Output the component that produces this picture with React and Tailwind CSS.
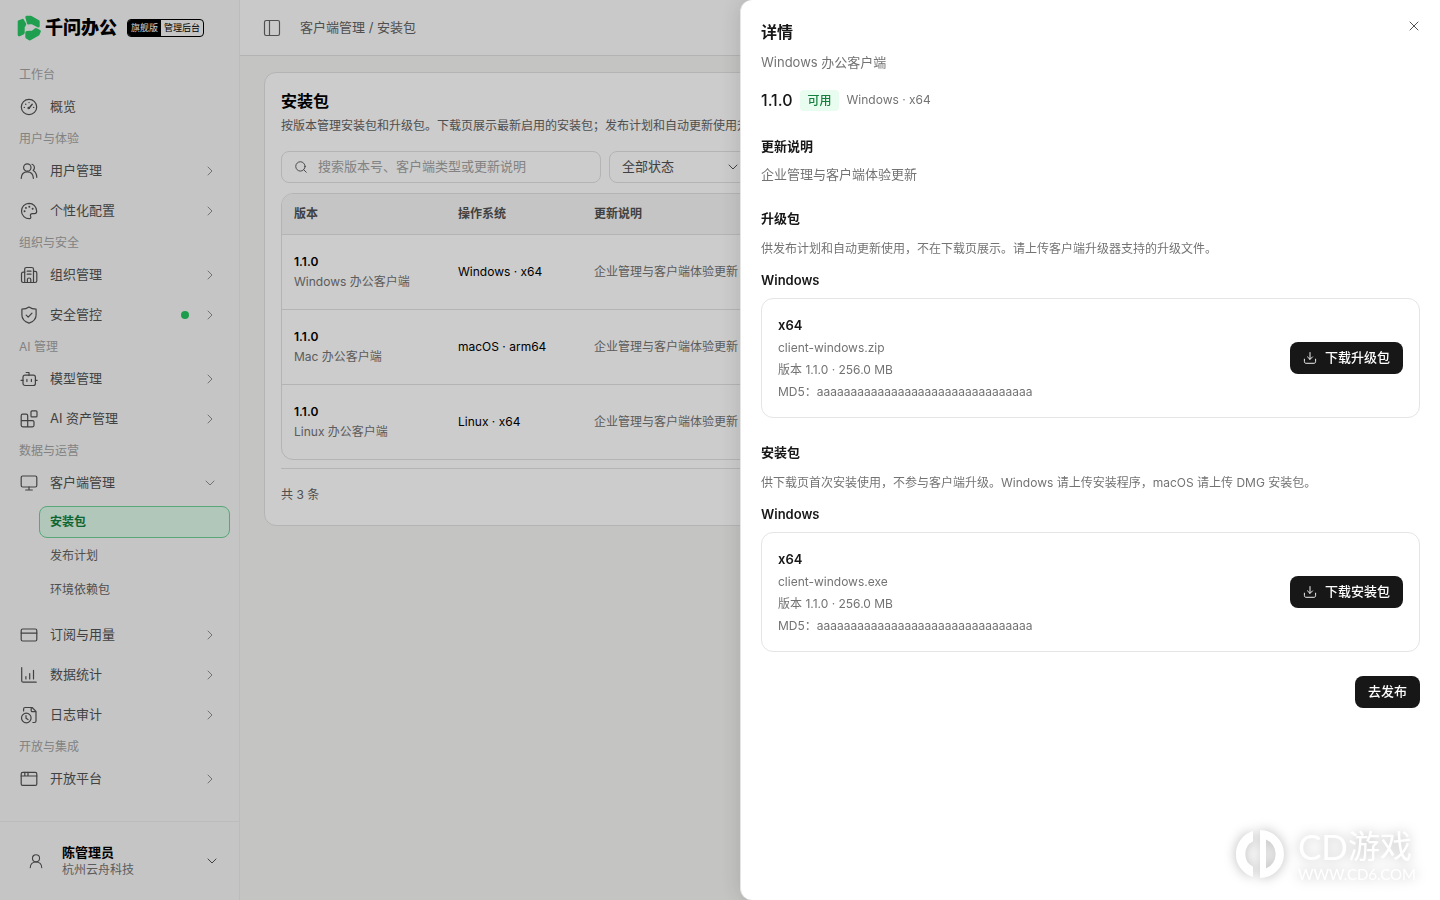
import React, { useState } from 'react';
import { ChevronDown, ChevronRight, PanelLeft, Search, X } from 'lucide-react';

const Icon = ({ children, className = 'h-[18px] w-[18px]' }) => (
    <svg
        viewBox="0 0 18 18"
        fill="none"
        stroke="currentColor"
        strokeWidth="1.2"
        strokeLinecap="round"
        strokeLinejoin="round"
        className={`shrink-0 ${className}`}
        aria-hidden="true"
    >
        {children}
    </svg>
);

const icons = {
    gauge: (
        <>
            <circle cx="9" cy="9" r="7.7" />
            <path d="M9 10.2 12.2 6.2" strokeWidth="1.4" />
            <circle cx="8.7" cy="10" r=".7" fill="currentColor" />
            <path d="M4.3 9.4h.1M5.7 6.2h.1M9 4.6h.1M13.6 9.4h.1" strokeWidth="1.4" />
        </>
    ),
    users: (
        <>
            <circle cx="7.3" cy="5.5" r="3.7" />
            <path d="M1.2 16.4c.2-3.9 2.3-6.5 6.1-6.5s5.9 2.6 6.1 6.5" />
            <path d="M12 2.3c2.8.9 3.2 4.3 1.2 6.2 2.3 1.3 3.5 3.7 3.6 6.8" />
        </>
    ),
    palette: (
        <>
            <path d="M9 1.3a7.7 7.7 0 1 0 .4 15.4c1.5-.1 1.7-1.4 1.2-2.4-.7-1.5.2-2.7 1.7-2.7h2.3c1.3 0 2.1-1 2.1-2.4C16.6 4.8 13.3 1.3 9 1.3Z" />
            <path d="M4.5 9.3h.1M5.9 5.9h.1M9.3 4.7h.1M12.6 6.7h.1" strokeWidth="1.9" />
        </>
    ),
    building: (
        <>
            <path d="M4.7 16.5V3.2c0-1 .7-1.7 1.7-1.7h5.4c1 0 1.7.7 1.7 1.7v13.3" />
            <path d="M4.7 6.2H3.2c-1 0-1.7.7-1.7 1.7v6.9c0 1 .7 1.7 1.7 1.7h11.9c1 0 1.7-.7 1.7-1.7V7c0-1-.7-1.7-1.7-1.7h-1.6" />
            <path d="M7.2 5.2h3.8M7.2 8.2h3.8M7.4 16.5v-3c0-.9.7-1.5 1.7-1.5s1.7.6 1.7 1.5v3" />
        </>
    ),
    shield: (
        <>
            <path d="M9 1c1.9 1.5 4.3 2.2 7.1 2.2v5.9c0 3.9-2.7 6.6-7.1 8-4.4-1.4-7.1-4.1-7.1-8V3.2C4.7 3.2 7.1 2.5 9 1Z" />
            <path d="m6.2 9.1 2 2L12 7.2" />
        </>
    ),
    bot: (
        <>
            <rect x="3" y="5.2" width="12.4" height="10.3" rx="2" />
            <path d="M9 5.2V2.5H6.2M1 10.3h2M15.4 10.3h1.8M6.9 9.4v2M11.4 9.4v2" />
        </>
    ),
    blocks: (
        <>
            <rect x="11" y=".9" width="6" height="6" rx="1" />
            <path d="M7.7 16.8V5.7c0-.9-.6-1.5-1.5-1.5H2.7c-.9 0-1.5.6-1.5 1.5v9.6c0 .9.6 1.5 1.5 1.5h9.8c.9 0 1.5-.6 1.5-1.5v-3.2c0-.9-.6-1.5-1.5-1.5H1.2" />
        </>
    ),
    monitor: (
        <>
            <rect x="1.2" y="2" width="15.6" height="11" rx="1.5" />
            <path d="M9 13v3M5.7 16h6.6" />
        </>
    ),
    card: (
        <>
            <rect x="1.2" y="3" width="15.6" height="12" rx="1.5" />
            <path d="M1.2 7.1h15.6" />
        </>
    ),
    chart: <path d="M1.7 1.7v13c0 .9.6 1.5 1.5 1.5h13M5.9 13v-2.3M9.7 13V7.5M13.5 13V4.3" />,
    log: (
        <>
            <circle cx="6.3" cy="12" r="4.8" />
            <path d="M6 9.7v2.6l2 1.3" />
            <path d="M3.6 4.9V3c0-.9.6-1.5 1.5-1.5h7L16 5.4v9.6c0 .9-.6 1.5-1.5 1.5h-1.6M11.2 1.5v3.2c0 .6.4 1 1 1H16" />
        </>
    ),
    windowIcon: (
        <>
            <rect x="1.2" y="2.4" width="15.6" height="13" rx="1.5" />
            <path d="M1.2 6h15.6M4.8 2.4V6M8 2.4V6" />
        </>
    ),
    user: (
        <>
            <circle cx="9" cy="6" r="4" />
            <path d="M2.5 16.5c.3-4 2.8-6.3 6.5-6.3s6.2 2.3 6.5 6.3" />
        </>
    ),
    download: <path d="M9 2v8.6M5.8 7.6 9 10.8l3.2-3.2M1.8 10.5v3.2c0 1.3.9 2.1 2.1 2.1h10.2c1.2 0 2.1-.8 2.1-2.1v-3.2" />,
};

const navGroups = [
    { label: '工作台', items: [{ icon: 'gauge', text: '概览', leaf: true }] },
    {
        label: '用户与体验',
        items: [
            { icon: 'users', text: '用户管理' },
            { icon: 'palette', text: '个性化配置' },
        ],
    },
    {
        label: '组织与安全',
        items: [
            { icon: 'building', text: '组织管理' },
            { icon: 'shield', text: '安全管控', dot: true },
        ],
    },
    {
        label: 'AI 管理',
        items: [
            { icon: 'bot', text: '模型管理' },
            { icon: 'blocks', text: 'AI 资产管理' },
        ],
    },
    {
        label: '数据与运营',
        items: [
            { icon: 'monitor', text: '客户端管理', children: ['安装包', '发布计划', '环境依赖包'] },
            { icon: 'card', text: '订阅与用量' },
            { icon: 'chart', text: '数据统计' },
            { icon: 'log', text: '日志审计' },
        ],
    },
    { label: '开放与集成', items: [{ icon: 'windowIcon', text: '开放平台' }] },
];

const releases = [
    { version: '1.1.0', client: 'Windows 办公客户端', os: 'Windows · x64', notes: '企业管理与客户端体验更新' },
    { version: '1.1.0', client: 'Mac 办公客户端', os: 'macOS · arm64', notes: '企业管理与客户端体验更新' },
    { version: '1.1.0', client: 'Linux 办公客户端', os: 'Linux · x64', notes: '企业管理与客户端体验更新' },
];

const packages = [
    {
        title: '升级包',
        desc: '供发布计划和自动更新使用，不在下载页展示。请上传客户端升级器支持的升级文件。',
        file: 'client-windows.zip',
        action: '下载升级包',
    },
    {
        title: '安装包',
        desc: '供下载页首次安装使用，不参与客户端升级。Windows 请上传安装程序，macOS 请上传 DMG 安装包。',
        file: 'client-windows.exe',
        action: '下载安装包',
    },
];

const Logo = () => (
    <div className="flex h-14 shrink-0 items-center pl-[17px]">
        <svg
            viewBox="0 0 24 26"
            className="h-[26px] w-6 shrink-0"
            fill="#27c763"
            stroke="#27c763"
            strokeWidth="3"
            strokeLinejoin="round"
            aria-hidden="true"
        >
            <path d="M9.800 2.200h4l7.400 4.300v4.400l-6.200-3.300-3.600.4Z" />
            <path d="M2.200 6.600 5.600 5.400l2.100 3.800L6.200 12v5.800l-4 2Z" />
            <path d="m9.800 17.400 6-.4 3.200-2.500 3.300 1.900-1.200 2.700-8.300 4.800-3-1.800Z" />
        </svg>
        <span className="ml-1 text-[18px] leading-6 font-black text-black">千问办公</span>
        <span className="ml-2.5 flex h-[18px] items-stretch overflow-hidden rounded border border-black text-[9px] leading-4 text-black">
            <span className="bg-black px-[3px] text-white">旗舰版</span>
            <span className="px-[3px]">管理后台</span>
        </span>
    </div>
);

const NavItem = ({ item }) => {
    const Arrow = item.children ? ChevronDown : ChevronRight;
    return (
        <li>
            <button type="button" className="flex h-10 w-full items-center pr-[21px] pl-5 text-[13px] text-[#525252]">
                <Icon>{icons[item.icon]}</Icon>
                <span className="ml-3">{item.text}</span>
                {item.dot && <span className="mr-[13px] ml-auto h-2 w-2 rounded-full bg-[#22c55e]" />}
                {!item.leaf && (
                    <Arrow size={16} strokeWidth={1.5} className={`text-[#8f8f8f] ${item.dot ? '' : 'ml-auto'}`} />
                )}
            </button>
            {item.children && (
                <ul className="flex flex-col gap-0.5 pt-[3px] pr-[9px] pb-[9px] pl-[39px]">
                    {item.children.map((child, i) => (
                        <li key={child}>
                            <a
                                href="#"
                                className={`flex h-8 items-center rounded-lg border px-2.5 text-xs ${
                                    i === 0
                                        ? 'border-[#6fd197] bg-[#dcf9e8] font-semibold text-[#15803d]'
                                        : 'border-transparent text-[#636363]'
                                }`}
                            >
                                {child}
                            </a>
                        </li>
                    ))}
                </ul>
            )}
        </li>
    );
};

const Sidebar = () => (
    <aside className="flex w-60 shrink-0 flex-col border-r border-[#ebebeb] bg-[#f7f7f7]">
        <Logo />
        <nav className="flex-1 overflow-hidden pt-[7px]">
            {navGroups.map((group) => (
                <div key={group.label}>
                    <h2 className="h-6 pl-[19px] text-xs leading-6 text-[#a3a3a3]">{group.label}</h2>
                    <ul>
                        {group.items.map((item) => (
                            <NavItem key={item.text} item={item} />
                        ))}
                    </ul>
                </div>
            ))}
        </nav>
        <button type="button" className="flex h-[79px] shrink-0 items-center border-t border-[#ebebeb] pr-[19px] pl-7 text-left">
            <Icon className="h-4 w-4 text-[#525252]">{icons.user}</Icon>
            <span className="ml-[18px] flex-1">
                <span className="block text-[13px] leading-[18px] font-semibold text-black">陈管理员</span>
                <span className="block text-xs leading-[18px] text-[#737373]">杭州云舟科技</span>
            </span>
            <ChevronDown size={16} strokeWidth={1.5} className="text-[#525252]" />
        </button>
    </aside>
);

const ReleaseTable = () => (
    <div className="mt-2.5 overflow-hidden rounded-xl border border-[#e2e2e2]">
        <table className="w-full table-fixed text-left text-xs">
            <thead className="bg-[#f7f7f7] text-[#525252]">
                <tr className="h-10 border-b border-[#e2e2e2]">
                    <th className="w-[164px] px-3 font-semibold">版本</th>
                    <th className="w-[136px] px-3 font-semibold">操作系统</th>
                    <th className="px-3 font-semibold">更新说明</th>
                </tr>
            </thead>
            <tbody>
                {releases.map((r) => (
                    <tr key={r.client} className="h-[75px] border-b border-[#e2e2e2] last:border-b-0">
                        <td className="px-3">
                            <div className="leading-5 font-semibold text-black">{r.version}</div>
                            <div className="leading-5 text-[#737373]">{r.client}</div>
                        </td>
                        <td className="px-3 text-black">{r.os}</td>
                        <td className="px-3 text-[#737373]">{r.notes}</td>
                    </tr>
                ))}
            </tbody>
        </table>
    </div>
);

const MainPage = () => (
    <div className="flex min-w-0 flex-1 flex-col bg-[#f5f5f3]">
        <header className="flex h-14 shrink-0 items-center border-b border-[#e0e0e0] bg-[#fcfcfc] px-[22px] text-[13px] text-[#636363]">
            <button type="button" aria-label="收起侧栏" className="mr-[18px]">
                <PanelLeft size={20} strokeWidth={1.4} />
            </button>
            <span>客户端管理 / 安装包</span>
        </header>
        <main className="px-6 py-4">
            <section className="rounded-xl border border-[#e2e2e2] bg-white p-4">
                <h1 className="text-base leading-6 font-semibold text-black">安装包</h1>
                <p className="text-xs leading-[26px] text-[#636363]">
                    按版本管理安装包和升级包。下载页展示最新启用的安装包；发布计划和自动更新使用升级包。
                </p>
                <div className="mt-3 flex gap-2">
                    <label className="flex h-8 w-80 items-center rounded-lg border border-[#e2e2e2] px-3">
                        <Search size={14} strokeWidth={1.6} className="text-[#525252]" />
                        <input
                            type="search"
                            aria-label="搜索"
                            placeholder="搜索版本号、客户端类型或更新说明"
                            className="ml-2.5 min-w-0 flex-1 bg-transparent text-[13px] outline-none placeholder:text-[#a3a3a3]"
                        />
                    </label>
                    <div className="relative">
                        <select
                            aria-label="状态"
                            className="h-8 w-[140px] appearance-none rounded-lg border border-[#e2e2e2] bg-white pl-3 text-[13px] text-[#525252]"
                        >
                            <option>全部状态</option>
                        </select>
                        <ChevronDown size={16} strokeWidth={1.5} className="pointer-events-none absolute top-2 right-2 text-[#525252]" />
                    </div>
                </div>
                <ReleaseTable />
                <div className="mt-2 border-t border-[#e2e2e2] pt-4 pb-1 text-xs leading-5 text-[#636363]">共 3 条</div>
            </section>
        </main>
    </div>
);

const PackageSection = ({ pkg }) => (
    <section className="mt-6">
        <h3 className="text-[13px] leading-5 font-semibold">{pkg.title}</h3>
        <p className="mt-2.5 text-xs leading-[22px] text-[#737373]">{pkg.desc}</p>
        <h4 className="mt-2.5 text-[13px] leading-5 font-semibold">Windows</h4>
        <div className="mt-2 flex items-center justify-between rounded-xl border border-[#e5e5e5] px-4 py-3.5">
            <div className="text-xs leading-[22px] text-[#737373]">
                <div className="text-[13px] leading-6 font-semibold text-[#171717]">x64</div>
                <div>{pkg.file}</div>
                <div>版本 1.1.0 · 256.0 MB</div>
                <div>MD5：aaaaaaaaaaaaaaaaaaaaaaaaaaaaaaaa</div>
            </div>
            <button type="button" className="flex h-8 items-center gap-2 rounded-lg bg-[#171717] px-[13px] text-[13px] font-medium text-white">
                <Icon className="h-3.5 w-3.5">{icons.download}</Icon>
                {pkg.action}
            </button>
        </div>
    </section>
);

const Watermark = () => (
    <div
        aria-hidden="true"
        className="absolute right-6 bottom-[18px] flex items-center gap-3.5 text-white drop-shadow-[0_0_6px_rgba(0,0,0,0.28)]"
    >
        <svg viewBox="0 0 48 48" className="h-12 w-12" fill="currentColor">
            <path d="M17 1v10.2a14.5 14.5 0 0 0 0 25.6V47A24 24 0 0 1 17 1Z" />
            <path fillRule="evenodd" d="M24 0a24 24 0 0 1 0 48ZM30 9.5v29a15.7 15.7 0 0 0 0-29Z" />
        </svg>
        <div>
            <div className="flex h-10 items-center font-['Lato','Noto_Sans_CJK_SC',sans-serif] leading-8">
                <span className="text-[35px]">CD</span>
                <span className="text-[32px]">游戏</span>
            </div>
            <div className="font-['Lato',sans-serif] text-[15px] leading-4">WWW.CD6.COM</div>
        </div>
    </div>
);

const DetailDrawer = ({ onClose }) => (
    <div
        role="dialog"
        aria-label="详情"
        className="fixed inset-y-0 right-0 w-[700px] max-w-full rounded-l-xl border-l border-[#e5e5e5] bg-white px-5 pt-5 text-[#171717] shadow-[0_0_24px_rgba(0,0,0,0.14)]"
    >
        <button type="button" aria-label="关闭" onClick={onClose} className="absolute top-[18px] right-[18px] text-[#525252]">
            <X size={16} strokeWidth={1.5} />
        </button>
        <h2 className="text-base leading-6 font-semibold">详情</h2>
        <p className="mt-2 text-[13px] leading-5 text-[#737373]">Windows 办公客户端</p>
        <div className="mt-4 flex h-6 items-center gap-2">
            <span className="text-base font-medium">1.1.0</span>
            <span className="rounded bg-[#e8fcef] px-[7px] text-xs leading-[21px] font-medium text-[#15803d]">可用</span>
            <span className="text-xs text-[#737373]">Windows · x64</span>
        </div>
        <section className="mt-6">
            <h3 className="text-[13px] leading-5 font-semibold">更新说明</h3>
            <p className="mt-2 text-[13px] leading-5 text-[#737373]">企业管理与客户端体验更新</p>
        </section>
        {packages.map((pkg) => (
            <PackageSection key={pkg.title} pkg={pkg} />
        ))}
        <div className="mt-6 flex justify-end">
            <button type="button" className="h-8 rounded-lg bg-[#171717] px-[13px] text-[13px] font-medium text-white">
                去发布
            </button>
        </div>
        <Watermark />
    </div>
);

const App = () => {
    const [open, setOpen] = useState(true);

    return (
        <div className="flex h-screen overflow-hidden font-['Inter','Noto_Sans_CJK_SC',sans-serif]">
            <Sidebar />
            <MainPage />
            {open && (
                <>
                    <div className="fixed inset-0 bg-black/20" onClick={() => setOpen(false)} />
                    <DetailDrawer onClose={() => setOpen(false)} />
                </>
            )}
        </div>
    );
};

export default App;
